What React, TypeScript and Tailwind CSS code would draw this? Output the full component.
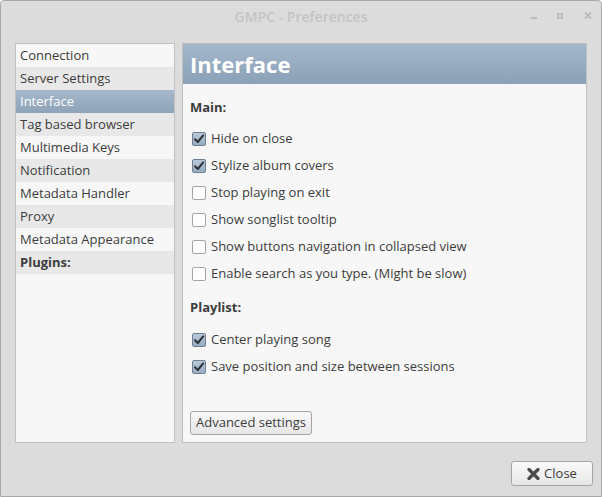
const sections = [
  "Connection",
  "Server Settings",
  "Interface",
  "Tag based browser",
  "Multimedia Keys",
  "Notification",
  "Metadata Handler",
  "Proxy",
  "Metadata Appearance",
];

const mainOptions = [
  { label: "Hide on close", checked: true },
  { label: "Stylize album covers", checked: true },
  { label: "Stop playing on exit", checked: false },
  { label: "Show songlist tooltip", checked: false },
  { label: "Show buttons navigation in collapsed view", checked: false },
  { label: "Enable search as you type. (Might be slow)", checked: false },
];

const playlistOptions = [
  { label: "Center playing song", checked: true },
  { label: "Save position and size between sessions", checked: true },
];

const font = { fontFamily: '"Open Sans", "DejaVu Sans", sans-serif' };

const Check = ({ checked }: { checked: boolean }) => (
  <span
    className={
      "flex h-[14px] w-[14px] items-center justify-center rounded-[2px] border " +
      (checked
        ? "border-[#6d7f91] bg-gradient-to-b from-[#b9c9d9] to-[#98adc2]"
        : "border-[#a4a4a4] bg-white")
    }
  >
    {checked && (
      <svg width="12" height="12" viewBox="0 0 12 12">
        <path d="M2 6.2 L4.8 9 L10.2 2.4" fill="none" stroke="#2c3238" strokeWidth="2" strokeLinecap="round" strokeLinejoin="round" />
      </svg>
    )}
  </span>
);

const Option = ({ label, checked }: { label: string; checked: boolean }) => (
  <div className="flex h-[27px] items-center pl-[2px]">
    <Check checked={checked} />
    <span className="ml-[5px]">{label}</span>
  </div>
);

export default function App() {
  return (
    <div
      style={font}
      className="flex h-[497px] w-[602px] flex-col rounded-t-[4px] border border-[#a8a8a8] bg-[#dcdcdc] text-[13px] text-[#3c3c3c]"
    >
      <div className="relative flex h-[30px] items-center justify-center">
        <span className="text-[14px] font-semibold text-[#c4c4c4]">GMPC - Preferences</span>
        {/* window controls */}
        <span className="absolute left-[530px] top-[16px] h-[2px] w-[6px] bg-[#bcbcbc]" />
        <span className="absolute left-[556px] top-[12px] h-[6px] w-[6px] border-2 border-[#bcbcbc]" />
        <svg className="absolute left-[583px] top-[11px]" width="8" height="7" viewBox="0 0 8 7">
          <path d="M1 0.5 L7 6.5 M7 0.5 L1 6.5" stroke="#bcbcbc" strokeWidth="2" />
        </svg>
      </div>

      <div className="mt-[12px] flex gap-[7px] px-[14px]">
        <div className="h-[400px] w-[160px] border border-[#c0c0c0] bg-[#f7f7f7]">
          {sections.map((s, i) => (
            <div
              key={s}
              className={
                "flex h-[23px] items-center pl-[4px] " +
                (s === "Interface"
                  ? "bg-gradient-to-b from-[#a5b8cb] to-[#8ea3b8] text-white"
                  : i % 2 === 1
                  ? "bg-[#e8e8e8]"
                  : "")
              }
            >
              {s}
            </div>
          ))}
          <div className="flex h-[23px] items-center bg-[#e8e8e8] pl-[4px] font-bold">Plugins:</div>
        </div>

        <div className="flex h-[400px] flex-1 flex-col border border-[#c0c0c0] bg-[#f7f7f7]">
          <div className="flex h-[40px] items-center bg-gradient-to-b from-[#a4b8cb] to-[#8aa0b6] pl-[7px] text-[22px] font-bold text-white">
            Interface
          </div>
          <div className="flex flex-col pl-[7px]">
            <div className="mt-[14px] h-[18px] font-bold leading-[18px]">Main:</div>
            <div className="mt-[9px]">
              {mainOptions.map((o) => (
                <Option key={o.label} {...o} />
              ))}
            </div>
            <div className="mt-[11px] h-[18px] font-bold leading-[18px]">Playlist:</div>
            <div className="mt-[10px]">
              {playlistOptions.map((o) => (
                <Option key={o.label} {...o} />
              ))}
            </div>
            <button className="mt-[31px] h-[24px] w-[122px] rounded-[3px] border border-[#a4a4a4] bg-gradient-to-b from-[#fafafa] to-[#e6e6e6] text-[13px] text-[#3c3c3c]">
              Advanced settings
            </button>
          </div>
        </div>
      </div>

      <div className="flex justify-end pr-[8px] pt-[18px]">
        <button className="flex h-[25px] w-[82px] items-center justify-center gap-[4px] rounded-[3px] border border-[#a4a4a4] bg-gradient-to-b from-[#fafafa] to-[#e6e6e6] text-[13px] text-[#3c3c3c]">
          <svg width="13" height="12" viewBox="0 0 13 12">
            <path d="M2 1.5 L11 10.5 M11 1.5 L2 10.5" stroke="#4a4a4a" strokeWidth="3.2" strokeLinecap="round" />
          </svg>
          Close
        </button>
      </div>
    </div>
  );
}
